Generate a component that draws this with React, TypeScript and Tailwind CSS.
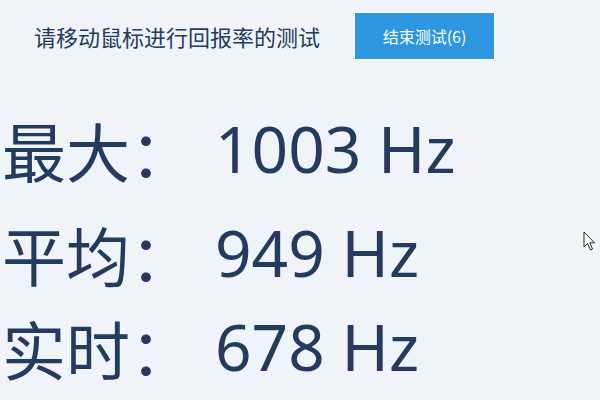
import React from "react";

const rows = [
  { label: "最大：", value: "1003 Hz" },
  { label: "平均：", value: "949 Hz" },
  { label: "实时：", value: "678 Hz" },
];

const cjk = { fontFamily: '"Noto Sans CJK SC", "Noto Sans", sans-serif' };
const num = { fontFamily: '"Noto Sans", "Noto Sans CJK SC", sans-serif' };

const App: React.FC = () => {
  return (
    <div className="relative w-[600px] h-[400px] overflow-hidden bg-[#f0f4f8] text-[#243a5e]">
      {/* header */}
      <div className="flex items-center pt-[12px] pl-[34px]">
        <span className="text-[22px] leading-[48px]" style={cjk}>
          请移动鼠标进行回报率的测试
        </span>
        <button
          className="ml-[34px] w-[141px] h-[48px] bg-[#2d96e0] border border-white text-white text-[16px]"
          style={cjk}
        >
          结束测试(6)
        </button>
      </div>

      {/* stats */}
      <div className="flex flex-col pt-[57px]">
        {rows.map((row, i) => (
          <div
            key={row.label}
            className={
              "flex items-center h-[64px] " +
              (i === 1 ? "mt-[40px]" : i === 2 ? "mt-[30px]" : "")
            }
          >
            <span className="w-[215px] pl-[2px] text-[64px] leading-[64px]" style={cjk}>
              {row.label}
            </span>
            <span className="text-[64px] leading-[64px]" style={num}>
              {row.value}
            </span>
          </div>
        ))}
      </div>

      {/* mouse pointer */}
      <svg
        className="absolute left-[583px] top-[231px]"
        width="14"
        height="21"
        viewBox="0 0 14 21"
      >
        <path
          d="M1 1 L1 16 L4.5 12.5 L7.5 19 L9.5 18 L6.8 11.8 L11.5 11.8 Z"
          fill="white"
          stroke="#222"
          strokeWidth="1"
          strokeLinejoin="round"
        />
      </svg>
    </div>
  );
};

export default App;
